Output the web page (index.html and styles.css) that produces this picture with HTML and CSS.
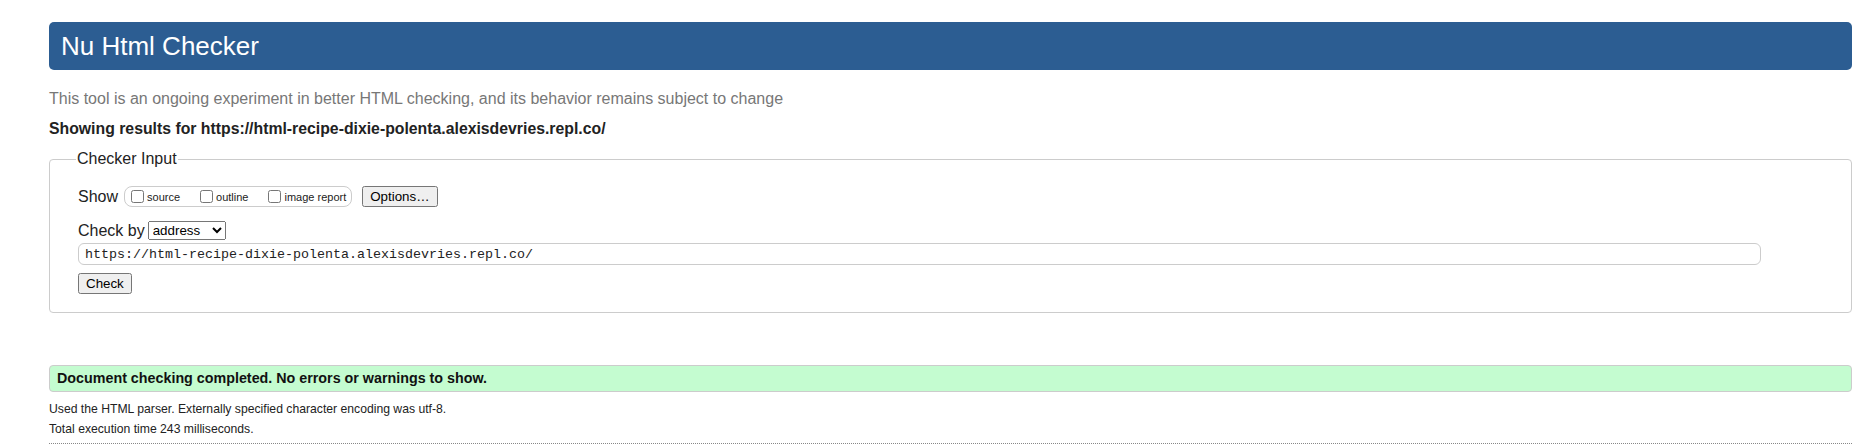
FILE: index.html
```html
<!DOCTYPE html>
<html lang="en">
<head>
<meta charset="utf-8">
<title>Showing results for https://html-recipe-dixie-polenta.alexisdevries.repl.co/ - Nu Html Checker</title>
<link rel="stylesheet" href="styles.css">
</head>
<body>
<div class="page">
  <h1 class="title">Nu Html Checker</h1>
  <p class="intro">This tool is an ongoing experiment in better HTML checking, and its behavior remains subject to change</p>
  <p class="showing">Showing results for https://html-recipe-dixie-polenta.alexisdevries.repl.co/</p>
  <form class="checker-form">
    <fieldset class="checker-input">
      <legend class="legend">Checker Input</legend>
      <div class="row show-row">
        <span class="row-label">Show</span>
        <span class="opts">
          <label class="opt"><input type="checkbox" class="cb">source</label>
          <label class="opt"><input type="checkbox" class="cb">outline</label>
          <label class="opt"><input type="checkbox" class="cb">image report</label>
        </span>
        <button type="button" class="btn options-btn">Options…</button>
      </div>
      <div class="row by-row">
        <label class="row-label">Check by</label>
        <select class="by-select">
          <option>address</option>
          <option>file upload</option>
          <option>text input</option>
        </select>
      </div>
      <div class="row url-row">
        <input type="url" class="doc-url" value="https://html-recipe-dixie-polenta.alexisdevries.repl.co/">
      </div>
      <div class="row submit-row">
        <button type="button" class="btn">Check</button>
      </div>
    </fieldset>
  </form>
  <p class="success">Document checking completed. No errors or warnings to show.</p>
  <p class="details">Used the HTML parser. Externally specified character encoding was utf-8.</p>
  <p class="details">Total execution time 243 milliseconds.</p>
  <hr class="dots">
</div>
</body>
</html>
```

FILE: styles.css
```css
html, body {
  margin: 0;
  padding: 0;
  background: #fff;
}

body {
  font-family: "Liberation Sans", Arial, sans-serif;
  color: #222;
  font-size: 16px;
}

.page {
  padding: 22px 13px 0 49px;
}

.title {
  margin: 0;
  height: 48px;
  line-height: 48px;
  padding: 0 12px;
  font-size: 26px;
  font-weight: normal;
  color: #fff;
  background: #2c5d92;
  border-radius: 5px;
}

.intro {
  margin: 19px 0 0;
  line-height: 20px;
  color: #777;
}

.showing {
  margin: 10px 0 0;
  line-height: 20px;
  font-size: 15.8px;
  font-weight: bold;
  color: #222;
}

.checker-form {
  margin: 11px 0 0;
}

.checker-input {
  margin: 0;
  padding: 0 28px 18px 28px;
  border: 1px solid #ccc;
  border-radius: 4px;
  min-width: 0;
}

.legend {
  padding: 0 1px;
  margin-left: -2px;
  line-height: 18px;
  color: #222;
}

.row {
  display: flex;
  align-items: center;
}

.show-row {
  margin-top: 18px;
  height: 21px;
}

.row-label {
  font-size: 16px;
  color: #222;
}

.opts {
  display: inline-flex;
  align-items: center;
  margin-left: 6px;
  height: 19px;
  padding: 0 5px 0 2px;
  border: 1px solid #ccc;
  border-radius: 8px;
}

.opt {
  display: inline-flex;
  align-items: center;
  font-size: 11px;
  color: #222;
}

.opt + .opt {
  margin-left: 16px;
}

.cb {
  margin: 0 3px 0 4px;
  width: 13px;
  height: 13px;
}

.btn {
  font-family: "Liberation Sans", Arial, sans-serif;
  font-size: 13.33px;
}

.options-btn {
  margin-left: 10px;
}

.by-row {
  margin-top: 14px;
  height: 19px;
}

.by-select {
  margin-left: 3px;
  width: 78px;
  font-family: "Liberation Sans", Arial, sans-serif;
  font-size: 13.33px;
}

.url-row {
  margin-top: 3px;
}

.doc-url {
  width: calc(100% - 62px);
  height: 22px;
  box-sizing: border-box;
  padding: 0 6px;
  border: 1px solid #ccc;
  border-radius: 6px;
  font-family: "Liberation Mono", "DejaVu Sans Mono", monospace;
  font-size: 13.33px;
  color: #222;
  outline: none;
}

.submit-row {
  margin-top: 8px;
}

.success {
  margin: 52px 0 0;
  padding: 0 7px;
  height: 27px;
  box-sizing: border-box;
  line-height: 25px;
  font-size: 14.3px;
  font-weight: bold;
  color: #111;
  background: #c4fcd0;
  border: 1px solid #ccc;
  border-radius: 4px;
}

.details {
  margin: 0;
  line-height: 20px;
  font-size: 12.2px;
  color: #222;
}

.success + .details {
  margin-top: 7px;
}

.dots {
  margin: 4px 0 0;
  border: 0;
  border-top: 1px dotted #888;
  height: 0;
}
```
